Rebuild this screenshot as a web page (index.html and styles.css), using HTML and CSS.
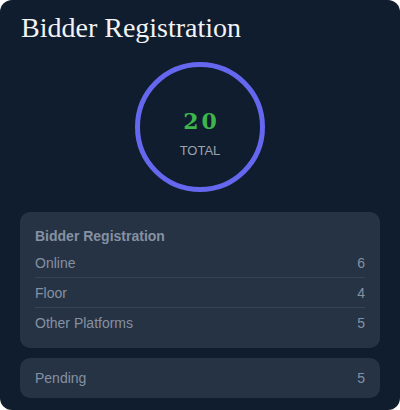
FILE: index.html
```html
<!DOCTYPE html>
<html lang="en">
<head>
<meta charset="UTF-8">
<meta name="viewport" content="width=device-width, initial-scale=1.0">
<title>Bidder Registration</title>
<link rel="stylesheet" href="styles.css">
</head>
<body>
<div class="panel">
  <h1>Bidder Registration</h1>
  <div class="ring">
    <span class="ring-count">20</span>
    <span class="ring-label">TOTAL</span>
  </div>
  <div class="box">
    <div class="box-title">Bidder Registration</div>
    <div class="row"><span>Online</span><span>6</span></div>
    <div class="row"><span>Floor</span><span>4</span></div>
    <div class="row"><span>Other Platforms</span><span>5</span></div>
  </div>
  <div class="box box-single">
    <div class="row"><span>Pending</span><span>5</span></div>
  </div>
</div>
</body>
</html>
```

FILE: styles.css
```css
body {
  margin: 0;
  padding: 0;
  background: #fff;
  font-family: "Liberation Sans", Arial, sans-serif;
}
.panel {
  width: 400px;
  height: 410px;
  box-sizing: border-box;
  padding: 12px 20px;
  background: #101d2e;
  border-radius: 12px;
  display: flex;
  flex-direction: column;
}
h1 {
  margin: 0 0 0 1px;
  font-family: "Liberation Serif", "Times New Roman", serif;
  font-weight: normal;
  font-size: 28px;
  line-height: 32px;
  color: #f1f3f5;
}
.ring {
  align-self: center;
  width: 130px;
  height: 130px;
  box-sizing: border-box;
  margin-top: 18px;
  padding-top: 44px;
  border: 5px solid #6567ee;
  border-radius: 50%;
  display: flex;
  flex-direction: column;
  align-items: center;
}
.ring-count {
  font-family: "DejaVu Serif", "Liberation Serif", serif;
  font-weight: bold;
  font-size: 22px;
  line-height: 20px;
  letter-spacing: 3px;
  margin-left: 3px;
  color: #3db74b;
}
.ring-label {
  margin-top: 12px;
  font-size: 13px;
  line-height: 15px;
  color: #9aa3ae;
}
.box {
  margin-top: 20px;
  padding: 16px 15px 10px;
  background: #263344;
  border-radius: 10px;
  color: #8591a2;
  font-size: 14px;
}
.box-title {
  font-weight: bold;
  line-height: 16px;
  margin-bottom: 4px;
}
.row {
  display: flex;
  justify-content: space-between;
  align-items: center;
  height: 30px;
  box-sizing: border-box;
  border-bottom: 1px solid #374355;
}
.row:last-child {
  border-bottom: none;
}
.box-single {
  margin-top: 10px;
  padding: 5px 15px;
}
```
